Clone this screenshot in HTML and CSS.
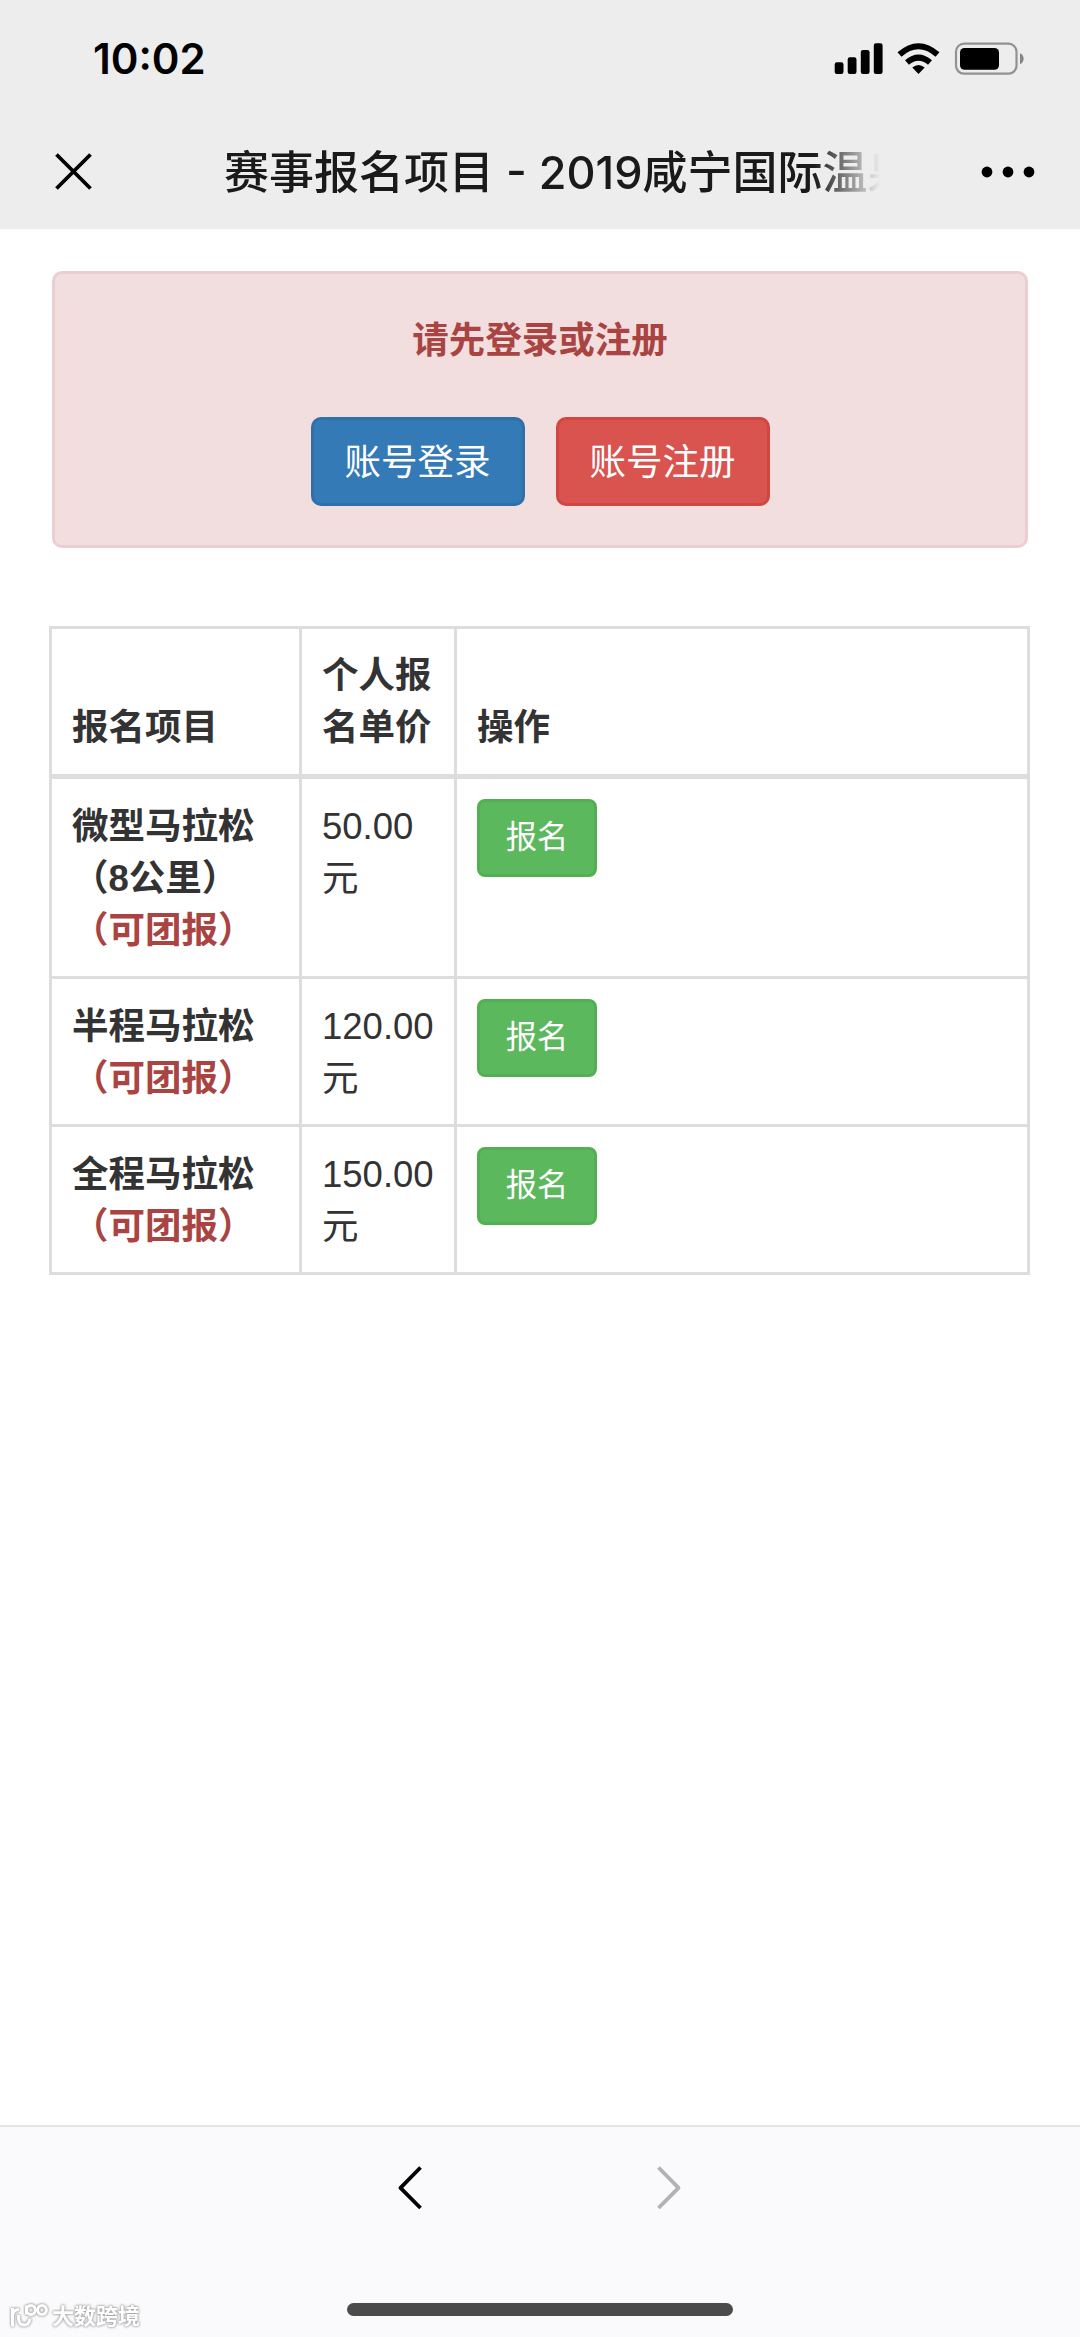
FILE: index.html
```html
<!DOCTYPE html>
<html lang="zh-CN">
<head>
    <meta charset="UTF-8">
    <meta name="viewport" content="width=device-width, initial-scale=1.0">
    <title>赛事报名项目</title>
    <link rel="stylesheet" href="styles.css">
</head>
<body>
    <header class="header">
        <div class="status-bar">
            <span class="time">10:02</span>
            <svg class="status-icons" width="190" height="34" viewBox="834 42 190 34">
                <rect x="834.7" y="62.3" width="8.8" height="11.7" rx="2.2" />
                <rect x="847.7" y="57.2" width="8.8" height="16.8" rx="2.2" />
                <rect x="860.8" y="50" width="8.8" height="24" rx="2.2" />
                <rect x="873.8" y="43.3" width="8.8" height="30.7" rx="2.2" />
                <path d="M899.5 54.5Q918.5 38 937.5 54.5" fill="none" stroke="#000" stroke-width="6" />
                <path d="M907 62.5Q918.5 52.6 930 62.5" fill="none" stroke="#000" stroke-width="6" />
                <path d="M912.3 67.5Q918.5 62.5 924.7 67.5L918.5 74Z" />
                <rect x="956" y="43.7" width="60.5" height="30" rx="8" fill="none" stroke="#929292" stroke-width="2.2" />
                <rect x="960" y="48" width="39" height="21.8" rx="4.5" />
                <path d="M1020 53.2Q1023.6 55 1023.6 58.7Q1023.6 62.5 1020 64.3Z" fill="#858585" />
            </svg>
        </div>
        <div class="nav-bar">
            <svg class="close" width="40" height="40" viewBox="0 0 40 40">
                <path d="M2.5 2.5L36.5 36.5M36.5 2.5L2.5 36.5" fill="none" stroke="#000" stroke-width="3.8" />
            </svg>
            <h1 class="title">赛事报名项目 - 2019咸宁国际温泉</h1>
            <svg class="more" width="54" height="12" viewBox="0 0 54 12">
                <circle cx="6" cy="6" r="5.4" />
                <circle cx="27" cy="6" r="5.4" />
                <circle cx="48" cy="6" r="5.4" />
            </svg>
        </div>
    </header>

    <main class="content">
        <div class="alert">
            <strong class="alert-text">请先登录或注册</strong>
            <div class="btn-group">
                <button type="button" class="btn btn-primary">账号登录</button>
                <button type="button" class="btn btn-danger">账号注册</button>
            </div>
        </div>

        <table class="table">
            <colgroup>
                <col class="col-name">
                <col class="col-price">
                <col>
            </colgroup>
            <thead>
                <tr>
                    <th>报名项目</th>
                    <th>个人报名单价</th>
                    <th>操作</th>
                </tr>
            </thead>
            <tbody>
                <tr class="row-tall">
                    <th>微型马拉松<br>（8公里）<br><span class="team">（可团报）</span></th>
                    <td>50.00<br>元</td>
                    <td><button type="button" class="btn btn-success">报名</button></td>
                </tr>
                <tr>
                    <th>半程马拉松<br><span class="team">（可团报）</span></th>
                    <td>120.00<br>元</td>
                    <td><button type="button" class="btn btn-success">报名</button></td>
                </tr>
                <tr>
                    <th>全程马拉松<br><span class="team">（可团报）</span></th>
                    <td>150.00<br>元</td>
                    <td><button type="button" class="btn btn-success">报名</button></td>
                </tr>
            </tbody>
        </table>
    </main>

    <footer class="toolbar">
        <div class="arrows">
            <svg width="26" height="46" viewBox="0 0 26 46">
                <path d="M22.5 2.5L2.5 22.8L22.5 43" fill="none" stroke="#000" stroke-width="3.8" stroke-linejoin="round" />
            </svg>
            <svg width="26" height="46" viewBox="0 0 26 46">
                <path d="M2.5 2.5L22.5 22.8L2.5 43" fill="none" stroke="#b2b2b2" stroke-width="3.8" stroke-linejoin="round" />
            </svg>
        </div>
        <div class="home-indicator"></div>
    </footer>

    <div class="watermark">
        <svg width="42" height="28" viewBox="0 0 42 28" fill="none" stroke="#fff" stroke-width="3">
            <path d="M4.5 5V23.5M4.5 12Q5.5 6.5 11 6.5" />
            <path d="M10.5 12Q10 22 16 22Q21 22 22 16" />
            <path d="M18.5 2.5V11.5" />
            <circle cx="23" cy="7" r="4.4" />
            <circle cx="34" cy="7" r="4.4" />
        </svg>
        <span>大数跨境</span>
    </div>
</body>
</html>
```

FILE: styles.css
```css
* {
    box-sizing: border-box;
}
body {
    margin: 0;
    min-height: 2337px;
    display: flex;
    flex-direction: column;
    background: #fff;
    color: #333;
    font-family: "Liberation Sans", "Noto Sans CJK SC", sans-serif;
    font-size: 36.5px;
    line-height: 52.2px;
}
svg {
    display: block;
    flex: none;
}

/* 顶部 */
.header {
    height: 229px;
    background: #ededed;
}
.status-bar {
    height: 118px;
    padding: 0 56px 0 93px;
    display: flex;
    align-items: center;
    justify-content: space-between;
}
.time {
    font-family: Inter, sans-serif;
    font-size: 42px;
    font-weight: 600;
    color: #000;
}
.nav-bar {
    height: 108px;
    padding: 0 45px 0 54px;
    display: flex;
    align-items: center;
}
.title {
    width: 656px;
    margin: 0 auto 0 130px;
    padding-top: 2px;
    overflow: hidden;
    white-space: nowrap;
    font-family: Inter, "Noto Sans CJK SC", sans-serif;
    font-size: 45px;
    font-weight: 500;
    line-height: 66px;
    color: #1a1a1a;
    -webkit-mask-image: linear-gradient(to right, #000 590px, transparent 656px);
    mask-image: linear-gradient(to right, #000 590px, transparent 656px);
}

/* 内容 */
.content {
    flex: 1;
    padding: 42px 49px 0;
}
.alert {
    height: 277px;
    margin: 0 3px 78px;
    padding-top: 41px;
    border: 3px solid #ebced2;
    border-radius: 10px;
    background: #f2dede;
    color: #a94442;
    text-align: center;
}
.alert-text {
    display: block;
    font-weight: 700;
}
.btn-group {
    display: flex;
    justify-content: center;
    gap: 31px;
    margin-top: 50px;
}
.btn {
    padding: 0;
    border: 3px solid transparent;
    border-radius: 10px;
    color: #fff;
    font-family: inherit;
    font-size: 36.5px;
    line-height: 52px;
}
.btn-primary,
.btn-danger {
    width: 214px;
    height: 89px;
    padding-top: 2px;
}
.btn-primary {
    background: #337ab7;
    border-color: #3070a8;
}
.btn-danger {
    background: #d9534f;
    border-color: #d24541;
}
.btn-success {
    display: block;
    width: 120px;
    height: 78px;
    border-radius: 8px;
    background: #5cb85c;
    border-color: #52b052;
    font-size: 31.3px;
}

/* 报名表 */
.table {
    width: 981px;
    table-layout: fixed;
    border-collapse: collapse;
}
.col-name {
    width: 250px;
}
.col-price {
    width: 155px;
}
.table th,
.table td {
    height: 148px;
    padding: 21px 17px 18px 20px;
    border: 3px solid #ddd;
    text-align: left;
    vertical-align: top;
}
.table th {
    font-weight: 700;
}
.table thead th {
    height: 149px;
    padding-top: 19px;
    padding-bottom: 20px;
    border-bottom-width: 5px;
    vertical-align: bottom;
}
.table tbody th,
.table tbody td {
    padding-top: 22px;
}
.table tbody td:last-child {
    padding-top: 20px;
}
.table .row-tall th {
    height: 201px;
}
.team {
    color: #a94442;
}

/* 底部 */
.toolbar {
    height: 212px;
    padding-top: 38px;
    border-top: 2px solid #e5e6e8;
    background: #fafafc;
}
.arrows {
    display: flex;
    justify-content: center;
    gap: 232px;
}
.home-indicator {
    width: 386px;
    height: 13px;
    margin: 92px auto 0;
    border-radius: 7px;
    background: #4b4b4b;
}
.watermark {
    position: absolute;
    left: 8px;
    top: 2303px;
    display: flex;
    align-items: center;
    gap: 2px;
    color: #fff;
    font-size: 22px;
    font-weight: 700;
    line-height: 28px;
    filter: drop-shadow(0 0 1px #999) drop-shadow(0 0 1px #bbb);
}
```
